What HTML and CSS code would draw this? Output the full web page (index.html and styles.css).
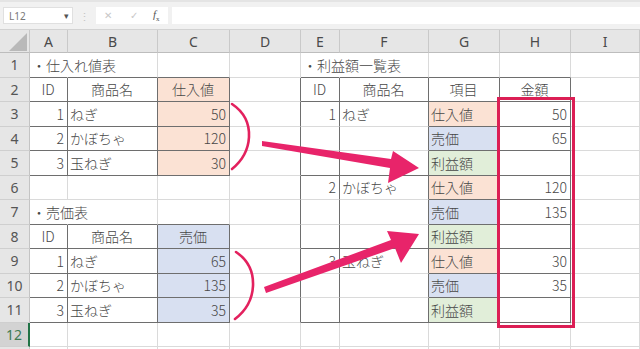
FILE: index.html
```html
<!DOCTYPE html>
<html lang="ja">
<head>
<meta charset="utf-8">
<title>Excel</title>
<link rel="stylesheet" href="styles.css">
</head>
<body>
<div class="page">
  <div class="fbar">
    <div class="namebox"><span class="nb-text">L12</span><span class="caret">▾</span></div>
    <div class="dots">⋮</div>
    <div class="fxbox"><span class="fx-x">✕</span><span class="fx-v">✓</span><span class="fx-f"><i>f</i><sub>x</sub></span></div>
    <div class="finput"></div>
  </div>
  <div class="sheet">
    <div class="corner"><svg width="30" height="23" viewBox="0 0 30 23"><polygon points="9,21 27,3 27,21" fill="#b9b9b9"/></svg></div>
    <div class="ch">A</div><div class="ch">B</div><div class="ch">C</div><div class="ch">D</div><div class="ch">E</div><div class="ch">F</div><div class="ch">G</div><div class="ch">H</div><div class="ch">I</div>

    <div class="rh">1</div>
    <div class="c nr db">・仕入れ値表</div><div class="c db"></div><div class="c db"></div><div class="c"></div>
    <div class="c nr db">・利益額一覧表</div><div class="c db"></div><div class="c db"></div><div class="c db"></div><div class="c"></div>

    <div class="rh">2</div>
    <div class="c m dr db">ID</div><div class="c m dr db">商品名</div><div class="c m dr db pe">仕入値</div><div class="c dr"></div>
    <div class="c m dr db">ID</div><div class="c m dr db">商品名</div><div class="c m dr db">項目</div><div class="c m dr db">金額</div><div class="c"></div>

    <div class="rh">3</div>
    <div class="c n dr db">1</div><div class="c dr db">ねぎ</div><div class="c n dr db pe">50</div><div class="c dr"></div>
    <div class="c n dr">1</div><div class="c dr">ねぎ</div><div class="c dr db pe">仕入値</div><div class="c n dr db">50</div><div class="c"></div>

    <div class="rh">4</div>
    <div class="c n dr db">2</div><div class="c dr db">かぼちゃ</div><div class="c n dr db pe">120</div><div class="c dr"></div>
    <div class="c dr"></div><div class="c dr"></div><div class="c dr db bl">売価</div><div class="c n dr db">65</div><div class="c"></div>

    <div class="rh">5</div>
    <div class="c n dr db">3</div><div class="c dr db">玉ねぎ</div><div class="c n dr db pe">30</div><div class="c dr"></div>
    <div class="c dr db"></div><div class="c dr db"></div><div class="c dr db gr">利益額</div><div class="c n dr db"></div><div class="c"></div>

    <div class="rh">6</div>
    <div class="c"></div><div class="c"></div><div class="c"></div><div class="c dr"></div>
    <div class="c n dr">2</div><div class="c dr">かぼちゃ</div><div class="c dr db pe">仕入値</div><div class="c n dr db">120</div><div class="c"></div>

    <div class="rh">7</div>
    <div class="c nr db">・売価表</div><div class="c db"></div><div class="c db"></div><div class="c dr"></div>
    <div class="c dr"></div><div class="c dr"></div><div class="c dr db bl">売価</div><div class="c n dr db">135</div><div class="c"></div>

    <div class="rh">8</div>
    <div class="c m dr db">ID</div><div class="c m dr db">商品名</div><div class="c m dr db bl">売価</div><div class="c dr"></div>
    <div class="c dr db"></div><div class="c dr db"></div><div class="c dr db gr">利益額</div><div class="c n dr db"></div><div class="c"></div>

    <div class="rh">9</div>
    <div class="c n dr db">1</div><div class="c dr db">ねぎ</div><div class="c n dr db bl">65</div><div class="c dr"></div>
    <div class="c n dr">3</div><div class="c dr">玉ねぎ</div><div class="c dr db pe">仕入値</div><div class="c n dr db">30</div><div class="c"></div>

    <div class="rh">10</div>
    <div class="c n dr db">2</div><div class="c dr db">かぼちゃ</div><div class="c n dr db bl">135</div><div class="c dr"></div>
    <div class="c dr"></div><div class="c dr"></div><div class="c dr db bl">売価</div><div class="c n dr db">35</div><div class="c"></div>

    <div class="rh">11</div>
    <div class="c n dr db">3</div><div class="c dr db">玉ねぎ</div><div class="c n dr db bl">35</div><div class="c dr"></div>
    <div class="c dr db"></div><div class="c dr db"></div><div class="c dr db gr">利益額</div><div class="c n dr db"></div><div class="c"></div>

    <div class="rh sel">12</div>
    <div class="c"></div><div class="c"></div><div class="c"></div><div class="c"></div>
    <div class="c"></div><div class="c"></div><div class="c"></div><div class="c"></div><div class="c"></div>

    <div class="rh"></div>
    <div class="c"></div><div class="c"></div><div class="c"></div><div class="c"></div>
    <div class="c"></div><div class="c"></div><div class="c"></div><div class="c"></div><div class="c"></div>
  </div>

  <svg class="marks" width="640" height="349" viewBox="0 0 640 349">
    <path d="M232,104 Q250,116 249,137 Q248,156 232,169" fill="none" stroke="#e3215e" stroke-width="2.6" stroke-linecap="round"/>
    <path d="M236,252 Q254,264 253,286 Q252,306 235,319" fill="none" stroke="#e3215e" stroke-width="2.6" stroke-linecap="round"/>
    <polygon points="262,141 391,159 393,151 419,168 388,183 390,168 262,146" fill="#e8246a"/>
    <polygon points="264,287 391,240 387,231 419,234 401,263 395,248 266,293" fill="#e8246a"/>
    <rect x="498.5" y="98.5" width="75" height="228" fill="none" stroke="#dc1f55" stroke-width="3"/>
  </svg>
</div>
</body>
</html>
```

FILE: styles.css
```css
* { box-sizing: border-box; }
html, body { margin: 0; padding: 0; }
body {
  width: 640px;
  height: 349px;
  overflow: hidden;
  background: #ffffff;
  font-family: "Noto Sans CJK JP", "Noto Sans", sans-serif;
}
.page {
  position: relative;
  width: 640px;
  height: 349px;
  overflow: hidden;
}
.fbar {
  height: 30px;
  background: #f1f1f1;
  border-top: 2px solid #e4e4e4;
  border-bottom: 1px solid #d2d2d2;
  display: flex;
  align-items: center;
  padding-left: 3px;
}
.namebox {
  width: 70px;
  height: 17px;
  background: #fff;
  border: 1px solid #e0e0e0;
  display: flex;
  align-items: center;
  justify-content: space-between;
  padding: 0 3px 0 5px;
  font-family: "Noto Sans", sans-serif;
  font-size: 10px;
  color: #777;
}
.caret { font-size: 9px; color: #555; }
.dots {
  width: 23px;
  text-align: center;
  color: #c4c4c4;
  font-size: 11px;
}
.fxbox {
  width: 72px;
  height: 17px;
  background: #fff;
  display: flex;
  align-items: center;
  padding-left: 8px;
  font-family: "DejaVu Sans", sans-serif;
}
.fx-x { color: #c8c8c8; font-size: 10px; width: 26px; }
.fx-v { color: #c8c8c8; font-size: 10px; width: 23px; }
.fx-f { color: #555; font-family: "Liberation Serif", serif; font-size: 11px; }
.fx-f sub { font-size: 7px; }
.finput {
  flex: 1;
  height: 17px;
  margin-left: 4px;
  background: #fff;
}
.sheet {
  display: grid;
  grid-template-columns: 30px 38px 90px 72px 71px 39px 89px 71px 71px 69px;
  grid-template-rows: 23px repeat(13, 24.5px);
}
.corner {
  background: #e6e6e6;
  border-right: 1px solid #c9c9c9;
  border-bottom: 1px solid #bdbdbd;
}
.corner svg { display: block; }
.ch {
  background: #e6e6e6;
  border-right: 1px solid #c9c9c9;
  border-bottom: 1px solid #bdbdbd;
  display: flex;
  align-items: center;
  justify-content: center;
  font-family: "Noto Sans", sans-serif;
  font-size: 14px;
  color: #4a4a4a;
}
.rh {
  background: #e6e6e6;
  border-right: 1px solid #c4c4c4;
  border-bottom: 1px solid #cfcfcf;
  display: flex;
  align-items: center;
  justify-content: center;
  font-family: "Noto Sans", sans-serif;
  font-size: 14px;
  color: #555;
}
.rh.sel {
  background: #d3d3d3;
  color: #3f7a52;
  border-right: 2px solid #217346;
}
.c {
  border-right: 1px solid #dadada;
  border-bottom: 1px solid #dadada;
  display: flex;
  align-items: center;
  padding: 0 3px 0 2px;
  white-space: nowrap;
  font-size: 14px;
  font-weight: 300;
  color: #474747;
  min-width: 0;
}
.c.n { justify-content: flex-end; }
.c.m { justify-content: center; }
.c.nr { border-right-color: transparent; }
.c.dr { border-right-color: #6e6e6e; }
.c.db { border-bottom-color: #6e6e6e; }
.c.pe { background: #fbe2d4; }
.c.bl { background: #d8e0f1; }
.c.gr { background: #e1eed9; }
.marks {
  position: absolute;
  left: 0;
  top: 0;
  pointer-events: none;
}
```
